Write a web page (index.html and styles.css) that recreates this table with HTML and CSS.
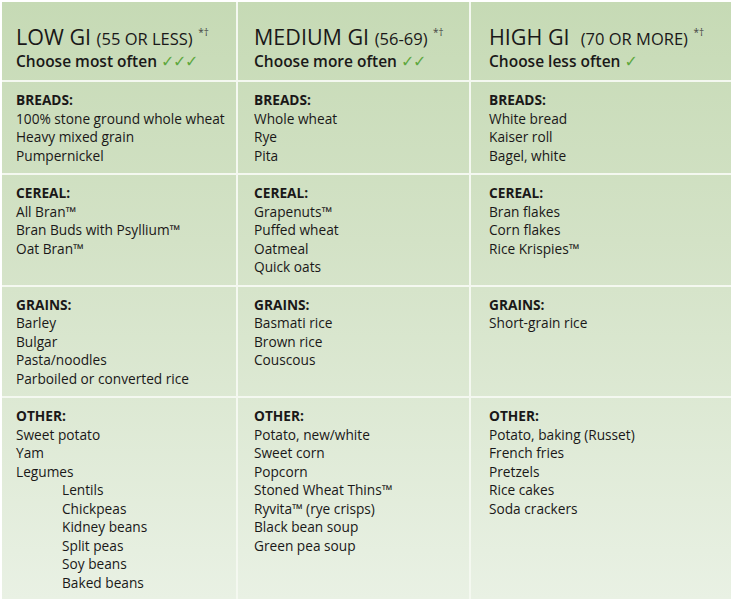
FILE: index.html
```html
<!DOCTYPE html>
<html>
<head>
<meta charset="utf-8">
<link rel="stylesheet" href="styles.css">
</head>
<body>
<div class="chart">
  <div class="cell head c1">
    <div class="title">LOW GI <span class="range">(55 OR LESS)</span> <sup class="mark">*†</sup></div>
    <div class="sub">Choose most often <span class="check">✓✓✓</span></div>
  </div>
  <div class="cell head c2">
    <div class="title">MEDIUM GI <span class="range">(56-69)</span> <sup class="mark">*†</sup></div>
    <div class="sub">Choose more often <span class="check">✓✓</span></div>
  </div>
  <div class="cell head c3 last">
    <div class="title">HIGH GI &nbsp;<span class="range">(70 OR MORE)</span> <sup class="mark">*†</sup></div>
    <div class="sub">Choose less often <span class="check">✓</span></div>
  </div>

  <div class="cell c1">
    <div class="cat">BREADS:</div>
    <div>100% stone ground whole wheat</div>
    <div>Heavy mixed grain</div>
    <div>Pumpernickel</div>
  </div>
  <div class="cell c2">
    <div class="cat">BREADS:</div>
    <div>Whole wheat</div>
    <div>Rye</div>
    <div>Pita</div>
  </div>
  <div class="cell c3 last">
    <div class="cat">BREADS:</div>
    <div>White bread</div>
    <div>Kaiser roll</div>
    <div>Bagel, white</div>
  </div>

  <div class="cell c1">
    <div class="cat">CEREAL:</div>
    <div>All Bran™</div>
    <div>Bran Buds with Psyllium™</div>
    <div>Oat Bran™</div>
  </div>
  <div class="cell c2">
    <div class="cat">CEREAL:</div>
    <div>Grapenuts™</div>
    <div>Puffed wheat</div>
    <div>Oatmeal</div>
    <div>Quick oats</div>
  </div>
  <div class="cell c3 last">
    <div class="cat">CEREAL:</div>
    <div>Bran flakes</div>
    <div>Corn flakes</div>
    <div>Rice Krispies™</div>
  </div>

  <div class="cell c1">
    <div class="cat">GRAINS:</div>
    <div>Barley</div>
    <div>Bulgar</div>
    <div>Pasta/noodles</div>
    <div>Parboiled or converted rice</div>
  </div>
  <div class="cell c2">
    <div class="cat">GRAINS:</div>
    <div>Basmati rice</div>
    <div>Brown rice</div>
    <div>Couscous</div>
  </div>
  <div class="cell c3 last">
    <div class="cat">GRAINS:</div>
    <div>Short-grain rice</div>
  </div>

  <div class="cell c1 bottom">
    <div class="cat">OTHER:</div>
    <div>Sweet potato</div>
    <div>Yam</div>
    <div>Legumes</div>
    <div class="ind">Lentils</div>
    <div class="ind">Chickpeas</div>
    <div class="ind">Kidney beans</div>
    <div class="ind">Split peas</div>
    <div class="ind">Soy beans</div>
    <div class="ind">Baked beans</div>
  </div>
  <div class="cell c2 bottom">
    <div class="cat">OTHER:</div>
    <div>Potato, new/white</div>
    <div>Sweet corn</div>
    <div>Popcorn</div>
    <div>Stoned Wheat Thins™</div>
    <div>Ryvita™ (rye crisps)</div>
    <div>Black bean soup</div>
    <div>Green pea soup</div>
  </div>
  <div class="cell c3 last bottom">
    <div class="cat">OTHER:</div>
    <div>Potato, baking (Russet)</div>
    <div>French fries</div>
    <div>Pretzels</div>
    <div>Rice cakes</div>
    <div>Soda crackers</div>
  </div>
</div>
</body>
</html>
```

FILE: styles.css
```css
html, body {
  margin: 0;
  padding: 0;
  background: #ffffff;
}

body {
  padding: 2px 4px 6px 2px;
  font-family: "Open Sans", "DejaVu Sans", sans-serif;
  color: #1a1818;
}

.chart {
  display: grid;
  grid-template-columns: 236px 233px 1fr;
  background: linear-gradient(to bottom, #c6dab5 0%, #d3e2c6 40%, #e9f1e4 100%);
}

.cell {
  border-right: 2px solid #f4f8f0;
  border-bottom: 2px solid #f4f8f0;
  padding: 9px 0 8px;
  font-size: 13.7px;
  line-height: 18.5px;
}

.cell.last { border-right: none; }
.cell.bottom { border-bottom: none; padding-bottom: 7px; }

.c1 { padding-left: 14px; }
.c2 { padding-left: 16px; }
.c3 { padding-left: 18px; }

.head {
  padding-top: 23px;
  padding-bottom: 8px;
}

.title {
  font-size: 21.5px;
  line-height: 24px;
  white-space: nowrap;
}

.range {
  font-size: 16.5px;
}

.mark {
  font-size: 10px;
  color: #444;
  vertical-align: 9px;
  line-height: 0;
}

.sub {
  font-size: 15.5px;
  line-height: 21px;
  font-weight: 600;
}

.check {
  font-family: "DejaVu Sans", sans-serif;
  color: #5ea83e;
  font-size: 16px;
  font-weight: 400;
  letter-spacing: -1.5px;
}

.cat {
  font-weight: 700;
}

.ind {
  padding-left: 46px;
}
```
